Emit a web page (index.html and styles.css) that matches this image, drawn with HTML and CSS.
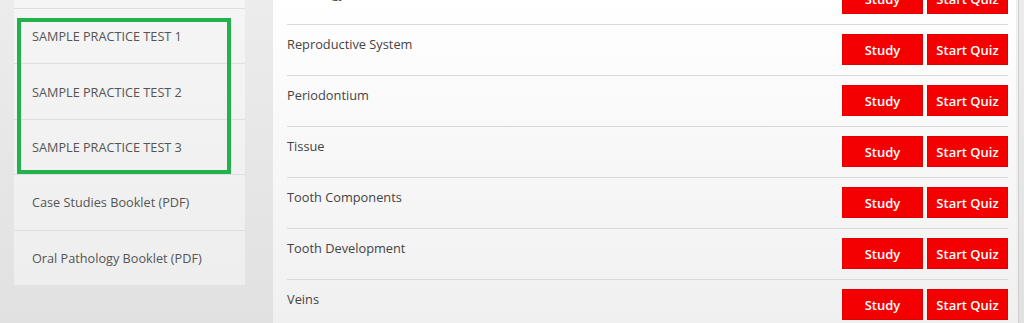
FILE: index.html
```html
<!DOCTYPE html>
<html lang="en">
<head>
<meta charset="utf-8">
<title>Practice Tests</title>
<link rel="stylesheet" href="styles.css">
</head>
<body>
<div class="page">
  <aside class="side-col">
    <div class="sidebar">
      <div class="side-item">SAMPLE PRACTICE TEST 1</div>
      <div class="side-item">SAMPLE PRACTICE TEST 2</div>
      <div class="side-item">SAMPLE PRACTICE TEST 3</div>
      <div class="side-item">Case Studies Booklet (PDF)</div>
      <div class="side-item">Oral Pathology Booklet (PDF)</div>
    </div>
    <div class="highlight"></div>
  </aside>
  <main class="main">
    <div class="rows">
      <div class="row"><span class="topic">Radiology</span><div class="btns"><a class="btn">Study</a><a class="btn">Start Quiz</a></div></div>
      <div class="row"><span class="topic">Reproductive System</span><div class="btns"><a class="btn">Study</a><a class="btn">Start Quiz</a></div></div>
      <div class="row"><span class="topic">Periodontium</span><div class="btns"><a class="btn">Study</a><a class="btn">Start Quiz</a></div></div>
      <div class="row"><span class="topic">Tissue</span><div class="btns"><a class="btn">Study</a><a class="btn">Start Quiz</a></div></div>
      <div class="row"><span class="topic">Tooth Components</span><div class="btns"><a class="btn">Study</a><a class="btn">Start Quiz</a></div></div>
      <div class="row"><span class="topic">Tooth Development</span><div class="btns"><a class="btn">Study</a><a class="btn">Start Quiz</a></div></div>
      <div class="row"><span class="topic">Veins</span><div class="btns"><a class="btn">Study</a><a class="btn">Start Quiz</a></div></div>
    </div>
  </main>
  <div class="edge"></div>
</div>
</body>
</html>
```
FILE: styles.css
```css
* { box-sizing: border-box; }
html, body { margin: 0; padding: 0; height: 100%; }
body {
  font-family: "Open Sans", "Liberation Sans", sans-serif;
  background: linear-gradient(#ececec, #e1e1e1);
  overflow: hidden;
}
.page {
  display: flex;
  height: 323px;
  overflow: hidden;
}
.side-col {
  position: relative;
  width: 273px;
  flex: 0 0 273px;
  padding-left: 14px;
}
.sidebar {
  width: 231px;
  padding-top: 8px;
  background: linear-gradient(#f5f5f5, #eeeeee);
}
.side-item {
  height: 55.4px;
  display: flex;
  align-items: center;
  padding-left: 18px;
  border-top: 1px solid #dedede;
  font-size: 12.7px;
  color: #555;
}
.highlight {
  position: absolute;
  left: 17px;
  top: 18px;
  width: 214px;
  height: 156px;
  border: 4px solid #22b14c;
}
.main {
  width: 743px;
  flex: 0 0 743px;
  background: linear-gradient(#ffffff, #f0f0f0);
  padding: 0 8px 0 14px;
}
.rows { margin-top: -26px; }
.row {
  display: flex;
  justify-content: space-between;
  align-items: flex-start;
  padding: 9px 0 10px;
  border-bottom: 1px solid #d9d9d9;
}
.topic {
  font-size: 12.8px;
  color: #444;
  line-height: 18px;
  margin-top: 1px;
}
.btns { display: flex; gap: 4px; }
.btn {
  width: 81px;
  height: 31px;
  display: flex;
  align-items: center;
  justify-content: center;
  background: #f50000;
  color: #fff;
  font-size: 13px;
  font-weight: 600;
  border: 1px solid #e00000;
}
.edge {
  width: 3px;
  border-right: 1px solid #cfcfcf;
  background: #f0f0f0;
}
```
